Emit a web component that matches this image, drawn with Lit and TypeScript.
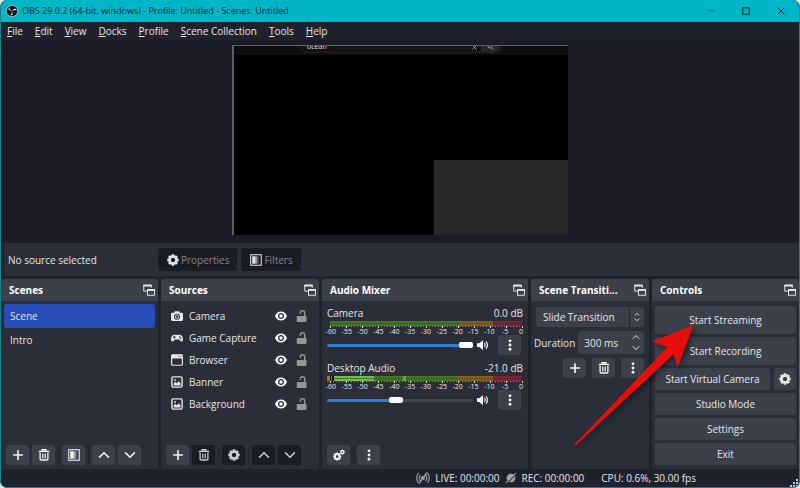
import { LitElement, html, css, svg, nothing } from "lit";
import { customElement, property, state } from "lit/decorators.js";
import { classMap } from "lit/directives/class-map.js";
import { styleMap } from "lit/directives/style-map.js";

const gearTeeth = (cx: number, cy: number, r: number, n = 8) =>
  Array.from({ length: n }, (_, i) => svg`<rect x=${cx - r * 0.26} y=${cy - r} width=${r * 0.52} height=${r * 0.6} rx=${r * 0.12}
    transform=${`rotate(${(360 / n) * i} ${cx} ${cy})`} fill="currentColor"/>`);

const gearShape = (cx: number, cy: number, r: number) => svg`
  <circle cx=${cx} cy=${cy} r=${r * 0.6} fill="none" stroke="currentColor" stroke-width=${r * 0.42}/>
  ${gearTeeth(cx, cy, r)}`;

const shapes: Record<string, unknown> = {
  plus: svg`<path d="M8 1.5v13M1.5 8h13" stroke="currentColor" stroke-width="2.2" fill="none"/>`,
  trash: svg`<path d="M1 3.2h14M5.5 2.6V1h5v1.6" stroke="currentColor" stroke-width="1.8" fill="none"/>
    <path d="M2.8 4.5v8.6q0 1.6 1.6 1.6h7.2q1.6 0 1.6-1.6V4.5" stroke="currentColor" stroke-width="1.8" fill="none"/>
    <path d="M6 6v6.5M8 6v6.5M10 6v6.5" stroke="currentColor" stroke-width="1.1"/>`,
  filter: svg`<rect x="1" y="1" width="14" height="14" fill="none" stroke="currentColor" stroke-width="1.4"/>
    <rect x="3" y="3" width="4.5" height="10" fill="currentColor"/>
    <rect x="7.5" y="3" width="2" height="10" fill="currentColor" opacity=".65"/>
    <rect x="9.5" y="3" width="2" height="10" fill="currentColor" opacity=".35"/>`,
  up: svg`<path d="M1.5 11.5 8 5l6.5 6.5" stroke="currentColor" stroke-width="2" fill="none"/>`,
  down: svg`<path d="M1.5 4.5 8 11l6.5-6.5" stroke="currentColor" stroke-width="2" fill="none"/>`,
  gear: gearShape(8, 8, 7.6),
  gears: svg`${gearShape(5.6, 10, 5.4)}${gearShape(12.6, 4.2, 3.2)}`,
  dots: svg`<circle cx="8" cy="2.4" r="1.9" fill="currentColor"/><circle cx="8" cy="8" r="1.9" fill="currentColor"/><circle cx="8" cy="13.6" r="1.9" fill="currentColor"/>`,
  float: svg`<path d="M5.5 9.5H1V1.5h10v3.5" stroke="currentColor" stroke-width="1.3" fill="none"/><path d="M.4 2.2h11.2" stroke="currentColor" stroke-width="2.4"/>
    <rect x="6" y="7.5" width="9.3" height="7.5" stroke="currentColor" stroke-width="1.3" fill="none"/><path d="M5.4 8h10.5" stroke="currentColor" stroke-width="2.4"/>`,
  camera: svg`<path fill="currentColor" fill-rule="evenodd" d="M5.2 1.5h5.6l1 2H14.5q1.5 0 1.5 1.5v8q0 1.5-1.5 1.5h-13Q0 14.5 0 13V5q0-1.5 1.5-1.5h2.7zM8 5a4 4 0 1 0 0 8 4 4 0 0 0 0-8z"/><circle cx="8" cy="9" r="2.3" fill="none" stroke="currentColor" stroke-width="1.2"/>`,
  gamepad: svg`<path fill="currentColor" fill-rule="evenodd" d="M4.2 3.5h7.6c2.6 0 4.2 3 4.2 6 0 2.2-.9 3.2-2 3.2-1.5 0-2.3-2.7-3.8-2.7H5.8C4.3 10 3.5 12.700 2 12.700c-1.100 0-2-1-2-3.200 0-3 1.600-6 4.200-6zM3.800 5.200v1.200H2.600v1.200h1.200v1.200H5V7.600h1.200V6.400H5V5.200zM11.500 5.500a1 1 0 1 0 0 2 1 1 0 0 0 0-2zM12.800 7.300a1 1 0 1 0 0 2 1 1 0 0 0 0-2z"/>`,
  browser: svg`<rect x=".8" y="1" width="14.4" height="14" rx="1.2" fill="none" stroke="currentColor" stroke-width="1.6"/><path fill="currentColor" d="M.8 1h14.4v5H.8z"/><path d="M10 3h1.3M12.700 2.500l1.400 1.400M14.100 2.500l-1.400 1.400" stroke="#2b2e38" stroke-width=".9"/>`,
  image: svg`<rect x="1.2" y="1.2" width="13.6" height="13.6" rx="2" fill="none" stroke="currentColor" stroke-width="1.9"/><path fill="currentColor" d="M3.5 12.500V10l2.200-2.200 2 1.700L10.400 7l2.200 2.500v3z"/><circle cx="5.4" cy="5.3" r="1.2" fill="currentColor"/>`,
  eye: svg`<path fill="currentColor" fill-rule="evenodd" d="M8 2C4.2 2 1.3 4.6 0 8c1.3 3.4 4.2 6 8 6s6.7-2.600 8-6c-1.300-3.400-4.200-6-8-6zm0 2a4 4 0 1 1 0 8 4 4 0 0 1 0-8z"/><circle cx="8" cy="8" r="2.3" fill="currentColor"/>`,
  unlock: svg`<rect x="1" y="8" width="13" height="8" rx="1" fill="currentColor"/><path d="M5.8 5V3.800a2.900 2.900 0 0 1 5.800 0V8" fill="none" stroke="currentColor" stroke-width="1.9"/>`,
  speaker: svg`<path fill="currentColor" d="M0 5.500h3L8 1.500v13l-5-4H0z"/><path d="M10 5.200q2 2.800 0 5.600M12 3q4 5 0 10" fill="none" stroke="currentColor" stroke-width="1.5"/>`,
  spin: svg`<path d="M4.500 5.500 8 2l3.500 3.500M4.500 10.500 8 14l3.500-3.500" fill="none" stroke="currentColor" stroke-width="1.5"/>`,
  live: svg`<path d="M5 4.500Q2.500 8 5 11.500M2.800 2.500q-4 5.500 0 11M11 4.500q2.500 3.500 0 7M13.200 2.500q4 5.500 0 11M3.500 14.500l9-13" fill="none" stroke="currentColor" stroke-width="1.3"/><circle cx="8" cy="8" r="2.2" fill="currentColor"/>`,
  rec: svg`<circle cx="8" cy="8" r="5.8" fill="currentColor"/><path d="M2.500 15.500 15 2" stroke="#1f222c" stroke-width="1.5"/><path d="M1.500 14.500 14.500 1.500" stroke="currentColor" stroke-width="1.5"/>`,
  minimize: svg`<path d="M1 7.500h14" stroke="currentColor" stroke-width="1.6" opacity=".6"/>`,
  maximize: svg`<rect x="1.5" y="1.5" width="13" height="13" fill="none" stroke="currentColor" stroke-width="2"/>`,
  close: svg`<path d="M1.500 1.500l13 13M14.500 1.500l-13 13" stroke="currentColor" stroke-width="1.9"/>`,
  logo: svg`<circle cx="8" cy="8" r="7.6" fill="#15131a" stroke="#e9eef0" stroke-width=".8"/>
    <g fill="#e9eef0">${[0, 120, 240].map((a) => svg`<path transform=${`rotate(${a} 8 8)`} d="M4.700 3.100C4.300 5.500 6 7.300 8.300 7.100 6.600 8.500 3.300 7.300 3.200 4.800q.5-1.100 1.500-1.700z"/>`)}</g>`,
};

@customElement("obs-icon")
class ObsIcon extends LitElement {
  @property() name = "";
  static styles = css`
    :host { display: inline-flex; flex: none; width: 12px; height: 12px; }
    svg { width: 100%; height: 100%; display: block; overflow: visible; }
  `;
  render() {
    return html`<svg viewBox="0 0 16 16" aria-hidden="true">${shapes[this.name]}</svg>`;
  }
}

@customElement("obs-dock")
class ObsDock extends LitElement {
  @property() heading = "";
  static styles = css`
    :host { display: flex; flex-direction: column; min-width: 0; position: relative; background: #2b2e38; border-radius: 2px; }
    header { display: flex; align-items: center; gap: 4px; height: 22px; padding: 0 3px 0 8px; background: #3c404b; border-radius: 2px 2px 0 0; }
    h2 { flex: 1; margin: 0; font-size: 10px; line-height: 16px; font-weight: 700; color: #fff; white-space: nowrap; }
    button { display: flex; padding: 0; border: 0; background: none; color: #e4e5e8; }
    .content { flex: 1; display: flex; flex-direction: column; }
  `;
  render() {
    return html`<header><h2>${this.heading}</h2><button aria-label="Float dock"><obs-icon name="float"></obs-icon></button></header>
      <div class="content"><slot></slot></div>`;
  }
}

@customElement("obs-channel")
class ObsChannel extends LitElement {
  @property() name = "";
  @property() level = "";
  @property({ type: Number }) volume = 100;
  @property({ type: Boolean }) active = false;
  static styles = css`
    :host { display: flex; flex-direction: column; }
    .title { display: flex; justify-content: space-between; line-height: 16px; }
    .meter { height: 14px; }
    .bar { position: relative; height: 5px; margin: 0 1px 0 3px; background: linear-gradient(#0003 0 0) 0 2px / 100% 1px no-repeat,
      linear-gradient(90deg, #447523 67%, #80601f 67% 85%, #7b2736 85%); }
    .active .bar { margin-left: 0; }
    .active .bar::before { content: ""; position: absolute; left: 0; top: 0; width: 24%; height: 5px;
      background: linear-gradient(#447523 0 0) 7px 2px / 100% 1px no-repeat, linear-gradient(90deg, #a37b2a 3px, #111 3px 4px, #8a8a2a 4px 5px, #111 5px 7px, #76b852 7px); }
    .active .bar::after { content: ""; position: absolute; left: 39%; top: 0; width: 3px; height: 5px; background: #67a544; }
    .ticks { height: 2px; margin: 0 0 0 3px; background:
      repeating-linear-gradient(90deg, #d5d6da 0 1px, transparent 1px 16px) 0 0 / 100% 2px no-repeat,
      repeating-linear-gradient(90deg, #8b8e97 0 1px, transparent 1px 3px) 0 0 / 100% 1px no-repeat; }
    .scale { display: flex; justify-content: space-between; margin: 0 -4px 0 -2px; font-size: 7px; line-height: 7px; }
    .scale span { width: 12px; text-align: center; }
    .row { display: flex; align-items: center; height: 20px; }
    input { appearance: none; flex: 1; min-width: 0; height: 14px; margin: 0 4px 0 0; background: none; }
    input::-webkit-slider-runnable-track { height: 3px; border-radius: 2px; background: linear-gradient(90deg, #2f7fd0 var(--fill), #424651 var(--fill)); }
    input::-webkit-slider-thumb { appearance: none; width: 14px; height: 6px; margin-top: -2px; border-radius: 2px; background: #fff; }
    button { display: flex; align-items: center; justify-content: center; padding: 0; border: 0; color: #fff; background: none; }
    .more { width: 23px; height: 20px; margin: 0 2px 0 9px; border-radius: 3px; background: #3c404b; }
  `;
  render() {
    const marks = [-60, -55, -50, -45, -40, -35, -30, -25, -20, -15, -10, -5, 0];
    return html`
      <div class="title"><label for="volume">${this.name}</label><span>${this.level}</span></div>
      <div class=${classMap({ meter: true, active: this.active })}>
        <div class="bar"></div><div class="ticks"></div>
        <div class="scale">${marks.map((m) => html`<span>${m}</span>`)}</div>
      </div>
      <div class="row">
        <input id="volume" type="range" min="0" max="100" .value=${String(this.volume)} style=${styleMap({ "--fill": `${this.volume}%` })}
          @input=${(e: Event) => (this.volume = Number((e.target as HTMLInputElement).value))}>
        <button aria-label="Mute"><obs-icon name="speaker"></obs-icon></button>
        <button class="more" aria-label="Channel options"><obs-icon name="dots"></obs-icon></button>
      </div>`;
  }
}

type Tool = { icon: string; label: string; off?: boolean; gap?: boolean };

@customElement("app-root")
class AppRoot extends LitElement {
  @state() private scene = "Scene";

  private scenes = ["Scene", "Intro"];
  private sources = [
    ["camera", "Camera"],
    ["gamepad", "Game Capture"],
    ["browser", "Browser"],
    ["image", "Banner"],
    ["image", "Background"],
  ];

  static styles = css`
    :host { display: block; background: #dfe7e4; font: 10px/16px "Open Sans", "Noto Sans", sans-serif; color: #e6e7ea; }
    * { box-sizing: border-box; }
    button, select, input { font: inherit; color: inherit; border: 0; margin: 0; padding: 0; }
    button { display: flex; align-items: center; justify-content: center; gap: 2px; border-radius: 3px; background: #3c404b; white-space: nowrap; }
    .window { display: flex; flex-direction: column; min-height: 100vh; border: solid #16808c; border-width: 0 1px 1px; border-radius: 7px; background: #1f222c; overflow: hidden; }
    .titlebar { display: flex; align-items: center; gap: 4px; height: 22px; padding: 0 8px 0 5px; background: #00b5c5; color: #0d2a33; font-size: 9px; }
    .titlebar h1 { flex: 1; margin: 0; font: inherit; }
    .titlebar button { width: 20px; height: 20px; margin-left: 11px; background: none; }
    .titlebar button obs-icon { width: 8px; height: 8px; }
    .menu { display: flex; gap: 12px; height: 18px; padding: 0 6px; align-items: center; }
    .menu a { color: inherit; text-decoration: none; }
    .preview { flex: 1; display: flex; justify-content: center; padding: 5px 0 7px; background: #1b1c27; }
    .canvas { display: flex; flex-direction: column; justify-content: space-between; width: 42%; min-height: 190px; border: solid #5d5e66; border-width: 1px 0 0 2px; background: #000; }
    .page { display: flex; justify-content: center; height: 9px; background: #0e0f10; overflow: hidden; }
    .search { display: flex; justify-content: space-between; width: 60%; height: 7px; padding-left: 5px; border-radius: 0 0 6px 6px; background: #121314; border: solid #222; border-width: 0 1px 1px; font-size: 7px; line-height: 2px; }
    .search obs-icon { width: 5px; height: 5px; margin-top: -1px; }
    .find { display: flex; gap: 4px; }
    .lens { display: flex; justify-content: center; width: 19px; border-radius: 0 0 6px 0; background: #252628; color: #999; }
    .webcam { align-self: flex-end; width: 40%; height: 75px; background: #282828; }
    .context { display: flex; align-items: center; gap: 4px; height: 33px; margin: 1px 0 3px 3px; padding: 0 4px; background: #2b2e38; }
    .context p { width: 146px; margin: 0; }
    .context button { height: 23px; padding: 0 8px 0 9px; background: #191b25; color: #83858d; }
    .context obs-icon { color: #e0e1e5; }
    .docks { display: grid; grid-template-columns: 157fr 158fr 206fr 118fr 147fr; gap: 3px; height: 190px; }
    ul { flex: 1; list-style: none; margin: 0; padding: 3px; }
    .sources { padding-top: 4px; }
    .scene { width: 100%; height: 24px; padding: 0 6px; justify-content: flex-start; background: none; }
    .scene.current { background: #284cb8; }
    .source { display: flex; align-items: center; gap: 6px; height: 22px; padding: 0 9px 0 7px; }
    .source span { flex: 1; }
    .source button { background: none; color: #fff; }
    .source .lock { width: 10px; margin-left: 4px; color: #96978f; }
    .tools { display: flex; align-items: center; gap: 3px; padding: 0 5px 4px; }
    .tools.end { justify-content: flex-end; padding: 4px 5px; gap: 6px; }
    .tool { width: 23px; height: 20px; color: #f4f4f6; }
    .tool.off { background: #191b25; color: #c9cad0; }
    .divider { width: 1px; height: 16px; background: #1f222c; }
    .mixer { flex: 1; display: flex; flex-direction: column; gap: 5px; padding: 4px 5px 0; }
    .transition { position: relative; display: flex; margin: 6px 5px 4px; }
    .transition select { appearance: none; width: 100%; height: 20px; padding: 0 7px; border-radius: 3px; background: linear-gradient(#23262f 0 0) right 14px top / 1px 100% no-repeat #3c404b; }
    .transition obs-icon { position: absolute; right: 2px; top: 5px; width: 10px; height: 10px; pointer-events: none; }
    .duration { display: flex; align-items: center; gap: 3px; padding: 0 5px 0 3px; }
    .spin { flex: 1; display: flex; height: 23px; padding: 0 4px 0 6px; border-radius: 3px; background: #3c404b; }
    .spin input { width: 100%; min-width: 0; background: none; }
    .steps { display: flex; flex-direction: column; justify-content: space-evenly; }
    .steps obs-icon { width: 8px; height: 8px; }
    .controls { display: flex; flex-direction: column; gap: 3px; padding: 5px 3px 3px; }
    .controls button { height: 22px; }
    .controls .tall { height: 28px; }
    .pair { display: flex; gap: 4px; }
    .pair .wide { flex: 1; }
    .pair .small { width: 22px; }
    .arrow { position: absolute; right: 100px; top: 38px; width: 126px; height: 132px; overflow: visible; pointer-events: none; }
    .status { display: flex; align-items: center; justify-content: flex-end; gap: 5px; height: 18px; padding-right: 103px; position: relative; }
    .status obs-icon { color: #a3a4a9; }
    .status .air { width: 14px; height: 14px; }
    .status .cpu { margin-left: 12px; }
    .grip { position: absolute; right: 1px; bottom: 0; width: 8px; height: 8px; }
  `;

  private tools(list: Tool[], end = false) {
    return html`<div class=${classMap({ tools: true, end })}>
      ${list.map((t) => html`${t.gap ? html`<i class="divider"></i>` : nothing}
        <button class=${classMap({ tool: true, off: !!t.off })} aria-label=${t.label}><obs-icon name=${t.icon}></obs-icon></button>`)}
    </div>`;
  }

  render() {
    return html`<div class="window">
      <div class="titlebar">
        <obs-icon name="logo"></obs-icon>
        <h1>OBS 29.0.2 (64-bit, windows) - Profile: Untitled - Scenes: Untitled</h1>
        <button aria-label="Minimize"><obs-icon name="minimize"></obs-icon></button>
        <button aria-label="Maximize"><obs-icon name="maximize"></obs-icon></button>
        <button aria-label="Close"><obs-icon name="close"></obs-icon></button>
      </div>
      <nav class="menu">
        ${["File", "Edit", "View", "Docks", "Profile", "Scene Collection", "Tools", "Help"].map(
          (m) => html`<a href="#"><u>${m[0]}</u>${m.slice(1)}</a>`)}
      </nav>
      <main class="preview">
        <div class="canvas">
          <div class="page"><div class="search"><span>ocean</span>
            <div class="find"><obs-icon name="close"></obs-icon><div class="lens"><svg width="7" height="5" viewBox="0 0 7 5"><path d="M1 0q0 2 2 2t2-2M4.500 2l2 2" fill="none" stroke="currentColor"/></svg></div></div></div></div>
          <div class="webcam"></div>
        </div>
      </main>
      <section class="context">
        <p>No source selected</p>
        <button><obs-icon name="gear"></obs-icon>Properties</button>
        <button><obs-icon name="filter"></obs-icon>Filters</button>
      </section>
      <div class="docks">
        <obs-dock heading="Scenes">
          <ul>${this.scenes.map((s) => html`<li><button class=${classMap({ scene: true, current: s === this.scene })} @click=${() => (this.scene = s)}>${s}</button></li>`)}</ul>
          ${this.tools([
            { icon: "plus", label: "Add scene" }, { icon: "trash", label: "Remove scene" },
            { icon: "filter", label: "Scene filters", gap: true },
            { icon: "up", label: "Move up", gap: true }, { icon: "down", label: "Move down" }])}
        </obs-dock>
        <obs-dock heading="Sources">
          <ul class="sources">${this.sources.map(([icon, name]) => html`<li class="source"><obs-icon name=${icon}></obs-icon><span>${name}</span>
            <button aria-label="Toggle visibility"><obs-icon name="eye"></obs-icon></button>
            <button class="lock" aria-label="Toggle lock"><obs-icon name="unlock"></obs-icon></button></li>`)}</ul>
          ${this.tools([
            { icon: "plus", label: "Add source" }, { icon: "trash", label: "Remove source", off: true },
            { icon: "gear", label: "Source properties", off: true, gap: true },
            { icon: "up", label: "Move up", off: true, gap: true }, { icon: "down", label: "Move down", off: true }])}
        </obs-dock>
        <obs-dock heading="Audio Mixer">
          <div class="mixer">
            <obs-channel name="Camera" level="0.0 dB" volume="100"></obs-channel>
            <obs-channel name="Desktop Audio" level="-21.0 dB" volume="47" active></obs-channel>
          </div>
          ${this.tools([{ icon: "gears", label: "Advanced audio properties" }, { icon: "dots", label: "Mixer menu", gap: true }])}
        </obs-dock>
        <obs-dock heading="Scene Transiti...">
          <div class="transition"><select aria-label="Transition"><option>Slide Transition</option></select><obs-icon name="spin"></obs-icon></div>
          <div class="duration"><label for="duration">Duration</label>
            <div class="spin"><input id="duration" value="300 ms">
              <div class="steps"><button aria-label="Increase"><obs-icon name="up"></obs-icon></button><button aria-label="Decrease"><obs-icon name="down"></obs-icon></button></div></div></div>
          ${this.tools([{ icon: "plus", label: "Add transition" }, { icon: "trash", label: "Remove transition" }, { icon: "dots", label: "Transition options" }], true)}
        </obs-dock>
        <obs-dock heading="Controls">
          <div class="controls">
            <button class="tall">Start Streaming</button>
            <button class="tall">Start Recording</button>
            <div class="pair"><button class="wide">Start Virtual Camera</button><button class="small" aria-label="Virtual camera settings"><obs-icon name="gear"></obs-icon></button></div>
            <button>Studio Mode</button>
            <button>Settings</button>
            <button>Exit</button>
          </div>
          <svg class="arrow" viewBox="0 0 126 132" aria-hidden="true">
            <defs><filter id="shade" x="-20%" y="-20%" width="140%" height="140%"><feDropShadow dx="2" dy="3" stdDeviation="3" flood-color="#000" flood-opacity=".5"/></filter></defs>
            <path filter="url(#shade)" fill="#e80c0c" d="M120.500 8 79 24.500l15.500 5.500L1 128l1 1L100.500 37l4 13z"/>
          </svg>
        </obs-dock>
      </div>
      <footer class="status">
        <obs-icon class="air" name="live"></obs-icon><span>LIVE: 00:00:00</span>
        <obs-icon name="rec"></obs-icon><span>REC: 00:00:00</span>
        <span class="cpu">CPU: 0.6%, 30.00 fps</span>
        <svg class="grip" viewBox="0 0 8 8" fill="#c9cacf" aria-hidden="true"><path d="M6 0h2v2H6zM3 3h2v2H3zM6 3h2v2H6zM0 6h2v2H0zM3 6h2v2H3zM6 6h2v2H6z"/></svg>
      </footer>
    </div>`;
  }
}
